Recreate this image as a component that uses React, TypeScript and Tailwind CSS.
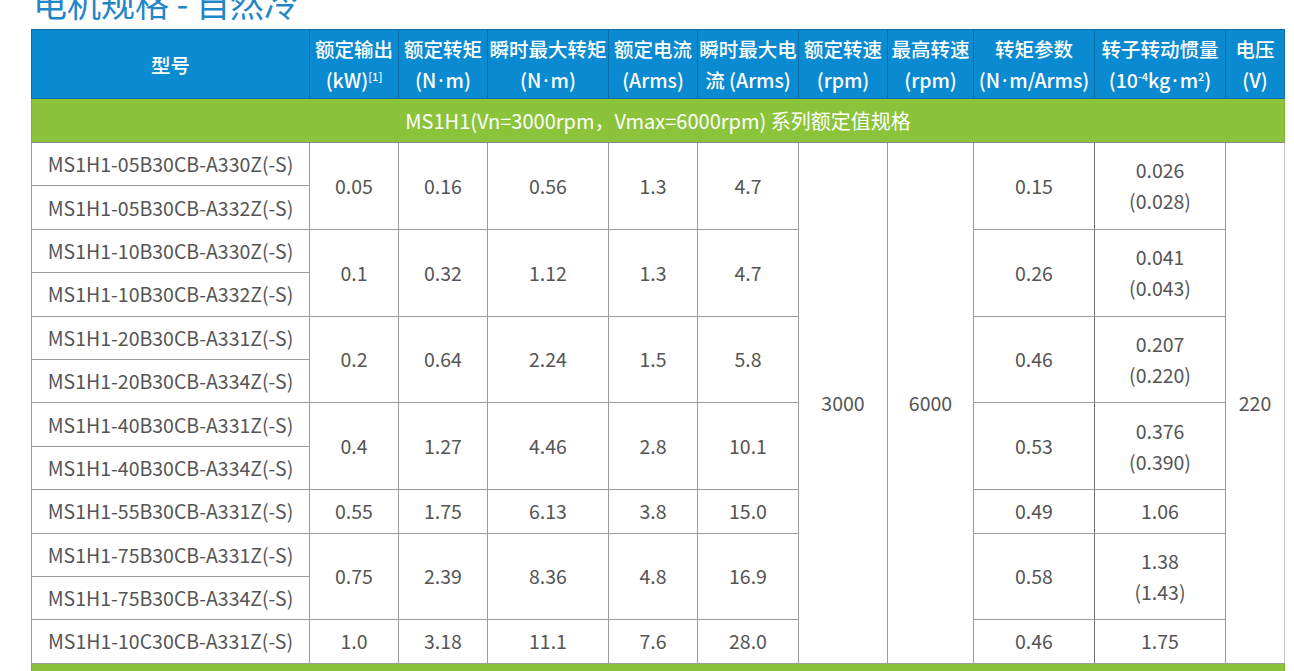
import React from "react";

type Group = {
  models: string[];
  kw: string;
  torque: string;
  peakTorque: string;
  current: string;
  peakCurrent: string;
  kt: string;
  inertia: string[];
};

const groups: Group[] = [
  { models: ["MS1H1-05B30CB-A330Z(-S)", "MS1H1-05B30CB-A332Z(-S)"], kw: "0.05", torque: "0.16", peakTorque: "0.56", current: "1.3", peakCurrent: "4.7", kt: "0.15", inertia: ["0.026", "(0.028)"] },
  { models: ["MS1H1-10B30CB-A330Z(-S)", "MS1H1-10B30CB-A332Z(-S)"], kw: "0.1", torque: "0.32", peakTorque: "1.12", current: "1.3", peakCurrent: "4.7", kt: "0.26", inertia: ["0.041", "(0.043)"] },
  { models: ["MS1H1-20B30CB-A331Z(-S)", "MS1H1-20B30CB-A334Z(-S)"], kw: "0.2", torque: "0.64", peakTorque: "2.24", current: "1.5", peakCurrent: "5.8", kt: "0.46", inertia: ["0.207", "(0.220)"] },
  { models: ["MS1H1-40B30CB-A331Z(-S)", "MS1H1-40B30CB-A334Z(-S)"], kw: "0.4", torque: "1.27", peakTorque: "4.46", current: "2.8", peakCurrent: "10.1", kt: "0.53", inertia: ["0.376", "(0.390)"] },
  { models: ["MS1H1-55B30CB-A331Z(-S)"], kw: "0.55", torque: "1.75", peakTorque: "6.13", current: "3.8", peakCurrent: "15.0", kt: "0.49", inertia: ["1.06"] },
  { models: ["MS1H1-75B30CB-A331Z(-S)", "MS1H1-75B30CB-A334Z(-S)"], kw: "0.75", torque: "2.39", peakTorque: "8.36", current: "4.8", peakCurrent: "16.9", kt: "0.58", inertia: ["1.38", "(1.43)"] },
  { models: ["MS1H1-10C30CB-A331Z(-S)"], kw: "1.0", torque: "3.18", peakTorque: "11.1", current: "7.6", peakCurrent: "28.0", kt: "0.46", inertia: ["1.75"] },
];

const widths = [278, 89, 89, 121, 89, 101, 89, 86, 121, 131, 59];

const th = "border border-[#0b6ea6] text-white font-medium text-[19.5px] leading-[31px] text-center align-middle p-0 whitespace-nowrap";
const td = "border border-[#9c9c9c] text-[#555555] text-[19.5px] leading-[31px] text-center align-middle p-0 pb-[1px] whitespace-nowrap";

function Dot() {
  return <span className="font-['Noto_Sans'] px-[2px]">·</span>;
}

function Sup({ children }: { children: React.ReactNode }) {
  return <sup className="text-[11px] -top-[7px]">{children}</sup>;
}

export default function App() {
  const rows: React.ReactNode[] = [];
  let first = true;
  groups.forEach((g, gi) => {
    g.models.forEach((m, mi) => {
      rows.push(
        <tr key={`${gi}-${mi}`} className="h-[43.4px]">
          <td className={td}>{m}</td>
          {mi === 0 && (
            <>
              <td className={td} rowSpan={g.models.length}>{g.kw}</td>
              <td className={td} rowSpan={g.models.length}>{g.torque}</td>
              <td className={td} rowSpan={g.models.length}>{g.peakTorque}</td>
              <td className={td} rowSpan={g.models.length}>{g.current}</td>
              <td className={td} rowSpan={g.models.length}>{g.peakCurrent}</td>
              {first && (
                <>
                  <td className={td} rowSpan={12}>3000</td>
                  <td className={td} rowSpan={12}>6000</td>
                </>
              )}
              <td className={td + " border-r-[#6f6f6f]"} rowSpan={g.models.length}>{g.kt}</td>
              <td className={td} rowSpan={g.models.length}>
                {g.inertia.map((t, i) => (
                  <div key={i}>{t}</div>
                ))}
              </td>
              {first && (
                <td className={td + " border-r-[#c8c8c8]"} rowSpan={12}>220</td>
              )}
            </>
          )}
        </tr>
      );
      first = false;
    });
  });

  return (
    <div className="w-[1294px] h-[671px] overflow-hidden bg-white" style={{ fontFamily: '"Noto Sans CJK SC", "Noto Sans", sans-serif' }}>
      <div className="h-[29px] overflow-hidden pl-[33px]">
        <div className="-mt-[20px] text-[34px] leading-[46px] text-[#1f86c8] font-normal whitespace-nowrap">电机规格 - 自然冷</div>
      </div>
      <table className="ml-[31px] border-collapse table-fixed" style={{ width: 1253 }}>
        <colgroup>
          {widths.map((w, i) => (
            <col key={i} style={{ width: w }} />
          ))}
        </colgroup>
        <thead>
          <tr className="h-[69px] bg-[#0a8ad0]">
            <th className={th}>型号</th>
            <th className={th}>
              <div>额定输出</div>
              <div>
                (kW)<Sup>[1]</Sup>
              </div>
            </th>
            <th className={th}>
              <div>额定转矩</div>
              <div>
                (N<Dot />m)
              </div>
            </th>
            <th className={th}>
              <div>瞬时最大转矩</div>
              <div>
                (N<Dot />m)
              </div>
            </th>
            <th className={th}>
              <div>额定电流</div>
              <div>(Arms)</div>
            </th>
            <th className={th}>
              <div>瞬时最大电</div>
              <div>流 (Arms)</div>
            </th>
            <th className={th}>
              <div>额定转速</div>
              <div>(rpm)</div>
            </th>
            <th className={th}>
              <div>最高转速</div>
              <div>(rpm)</div>
            </th>
            <th className={th}>
              <div>转矩参数</div>
              <div>
                (N<Dot />m/Arms)
              </div>
            </th>
            <th className={th}>
              <div>转子转动惯量</div>
              <div>
                (10<Sup>-4</Sup>kg<Dot />m<Sup>2</Sup>)
              </div>
            </th>
            <th className={th}>
              <div>电压</div>
              <div>(V)</div>
            </th>
          </tr>
        </thead>
        <tbody>
          <tr className="h-[44px] bg-[#8bc43a]">
            <td colSpan={11} className="border border-[#7fae3a] border-t-[#3b6f8a] border-b-[#8a8a8a] text-white text-[20px] text-center align-middle p-0 font-normal">
              MS1H1(Vn=3000rpm，Vmax=6000rpm) 系列额定值规格
            </td>
          </tr>
          {rows}
          <tr className="h-[44px] bg-[#8bc43a]">
            <td colSpan={11} className="border border-[#7fae3a] p-0"></td>
          </tr>
        </tbody>
      </table>
    </div>
  );
}
